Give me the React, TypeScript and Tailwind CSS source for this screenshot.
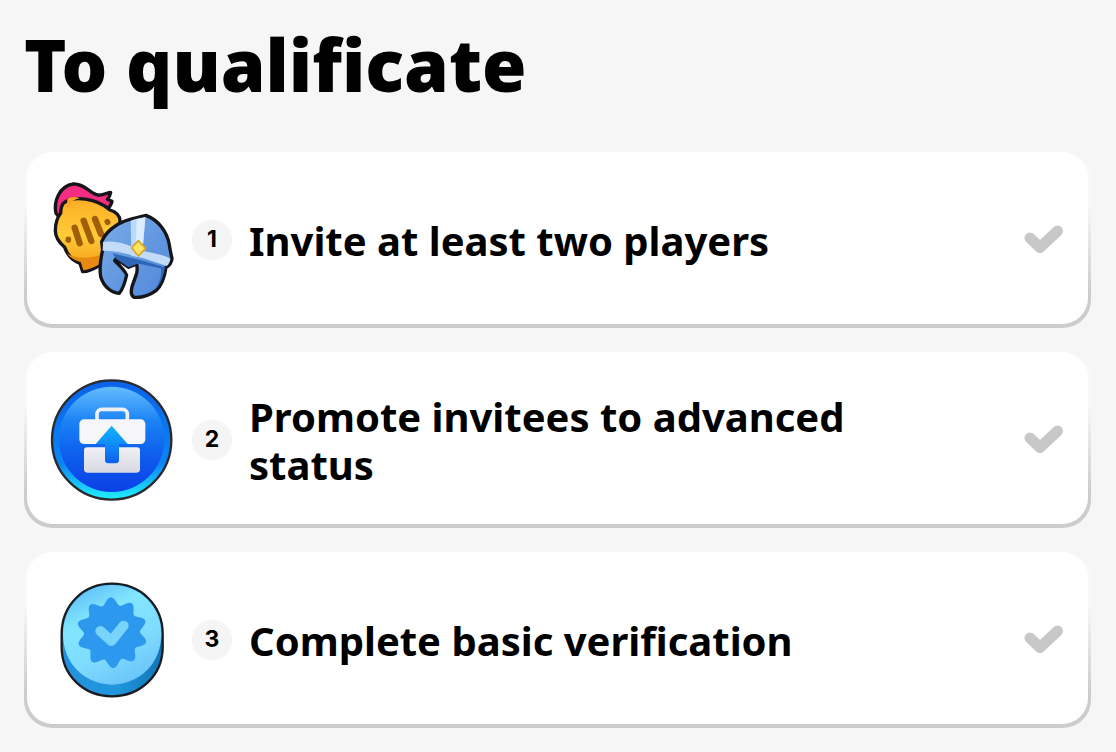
import type { ReactNode } from "react";

const font = { fontFamily: '"Noto Sans", sans-serif' };

function Helmets() {
  return (
    <svg width="124" height="124" viewBox="60 54 372 372">
      <defs>
        <linearGradient id="g1" x1="0" y1="0" x2="0" y2="1">
          <stop offset="0" stopColor="#fcae25" />
          <stop offset="0.5" stopColor="#ffcb38" />
          <stop offset="1" stopColor="#f49c14" />
        </linearGradient>
        <linearGradient id="h1" x1="0" y1="0" x2="1" y2="1">
          <stop offset="0" stopColor="#79ace9" />
          <stop offset="1" stopColor="#4f86d8" />
        </linearGradient>
      </defs>
      <path d="M78 160 C70 125 88 78 130 72 C165 70 180 102 205 105 C220 107 232 97 242 97 C240 108 236 114 232 118 L246 124 C244 134 238 142 230 148 L90 175 Z" fill="#f42c82" stroke="#15151a" strokeWidth="10" strokeLinejoin="round" />
      <path d="M100 130 C130 105 200 115 240 150 C258 155 270 168 270 182 C270 200 258 215 250 230 L215 312 C195 325 175 335 158 335 L150 310 C128 302 112 285 104 262 C88 248 76 232 76 212 C76 190 84 170 92 160 C92 148 94 138 100 130 Z" fill="url(#g1)" stroke="#15151a" strokeWidth="10" strokeLinejoin="round" />
      <path d="M112 118 C118 110 135 108 150 115 C130 118 118 130 110 150 Z" fill="#f9a521" />
      <path d="M110 280 C140 300 190 295 225 280 L212 310 C195 322 175 330 160 330 L152 306 C135 302 120 292 110 280 Z" fill="#e88a12" />
      <g stroke="#a05f06" strokeLinecap="round" fill="none">
        <path d="M115 238 L115 240" strokeWidth="17" />
        <path d="M134 203 L149 250" strokeWidth="19" />
        <path d="M161 182 L184 243" strokeWidth="19" />
        <path d="M195 177 L213 222" strokeWidth="19" />
        <path d="M232 185 L233 187" strokeWidth="17" />
      </g>
      <path d="M348 166 C385 180 412 215 418 255 C420 270 424 285 426 296 C424 308 418 318 408 322 C404 352 396 376 378 392 C360 405 335 414 312 412 C304 408 302 396 306 380 L320 340 C322 330 322 322 320 312 L296 322 L258 296 L254 302 C268 315 284 330 290 345 C285 368 280 385 268 400 C245 398 222 382 212 350 C208 325 212 295 218 270 L215 245 C225 220 255 190 300 178 Z" fill="url(#h1)" stroke="#15151a" strokeWidth="10" strokeLinejoin="round" />
      <path d="M248 280 L330 300 L405 322 C400 350 392 372 376 388 C392 360 396 340 392 325 L330 312 L320 312 L296 322 L258 296 Z" fill="#2f66b8" />
      <path d="M302 182 C316 177 332 173 346 172 L336 290 L304 288 Z" fill="#b9d8fa" />
      <path d="M320 178 L346 172 L336 290 L316 290 Z" fill="#dcedfe" />
      <path d="M219 246 C260 240 290 252 330 270 C365 280 400 282 421 296 C420 306 416 313 410 318 C380 308 350 296 320 290 C285 278 250 272 218 272 Z" fill="#c2dbf8" />
      <path d="M325 242 L347 265 L325 288 L305 263 Z" fill="#fde564" stroke="#dca322" strokeWidth="5" strokeLinejoin="round" />
    </svg>
  );
}

function Briefcase() {
  return (
    <svg width="124" height="124" viewBox="60 54 372 372">
      <defs>
        <linearGradient id="b1" x1="0" y1="0" x2="0" y2="1">
          <stop offset="0" stopColor="#0a62e8" />
          <stop offset="0.7" stopColor="#0b86f4" />
          <stop offset="1" stopColor="#1ff2ff" />
        </linearGradient>
        <linearGradient id="b2" x1="0" y1="0" x2="0" y2="1">
          <stop offset="0" stopColor="#65bcfd" />
          <stop offset="0.32" stopColor="#1c84f6" />
          <stop offset="0.6" stopColor="#0f63ee" />
          <stop offset="1" stopColor="#0b3fe6" />
        </linearGradient>
        <linearGradient id="b3" x1="0" y1="0" x2="0" y2="1">
          <stop offset="0" stopColor="#f0f0f5" />
          <stop offset="1" stopColor="#d8d8e2" />
        </linearGradient>
        <linearGradient id="b4" x1="0" y1="0" x2="0" y2="1">
          <stop offset="0" stopColor="#0fb4ff" />
          <stop offset="0.5" stopColor="#0f8cf8" />
          <stop offset="1" stopColor="#0e5eee" />
        </linearGradient>
      </defs>
      <circle cx="245" cy="240" r="179" fill="url(#b1)" stroke="#2a2a30" strokeWidth="7" />
      <circle cx="245" cy="238" r="158" fill="url(#b2)" />
      <rect x="201" y="148" width="91" height="40" rx="14" fill="none" stroke="#eef0f6" strokeWidth="11" />
      <rect x="148" y="178" width="198" height="74" rx="14" fill="#f6f6f9" />
      <rect x="162" y="262" width="168" height="76" rx="10" fill="url(#b3)" />
      <path d="M245 197 L293 252 H267 V300 Q267 310 257 310 H235 Q225 310 225 300 V252 H197 Z" fill="url(#b4)" />
    </svg>
  );
}

function Badge() {
  const bumps = 10;
  let d = "";
  const steps = 240;
  for (let i = 0; i < steps; i++) {
    const a = (i / steps) * Math.PI * 2;
    const r = 95 + 11 * Math.cos(a * bumps + 0.35);
    d += `${i ? "L" : "M"}${(246 + r * Math.sin(a)).toFixed(1)} ${(218 - r * Math.cos(a)).toFixed(1)}`;
  }
  d += "Z";
  return (
    <svg width="124" height="124" viewBox="60 54 372 372">
      <defs>
        <linearGradient id="c1" x1="0.2" y1="0" x2="0.7" y2="1">
          <stop offset="0" stopColor="#5dbcf7" />
          <stop offset="0.3" stopColor="#82e6ff" />
          <stop offset="0.65" stopColor="#7fdcfe" />
          <stop offset="1" stopColor="#69c2fa" />
        </linearGradient>
        <linearGradient id="c2" x1="0" y1="0" x2="1" y2="0">
          <stop offset="0" stopColor="#2590de" />
          <stop offset="0.55" stopColor="#2196dc" />
          <stop offset="1" stopColor="#0f74b6" />
        </linearGradient>
      </defs>
      <path d="M95 222 C95 135 160 71 246 71 C332 71 398 135 398 222 V262 C398 345 332 409 246 409 C160 409 95 345 95 262 Z" fill="url(#c2)" stroke="#1b1b20" strokeWidth="7" />
      <path d="M99 222 C99 138 162 75 246 75 C330 75 394 138 394 222 C394 310 330 372 246 374 C162 372 99 310 99 222 Z" fill="url(#c1)" />
      <path d={d} fill="#2c98ee" />
      <path d="M211 213 L244 243 L281 197" fill="none" stroke="#78d3fd" strokeWidth="30" strokeLinecap="round" strokeLinejoin="round" />
    </svg>
  );
}

function Step({ n, icon, text }: { n: number; icon: ReactNode; text: string }) {
  return (
    <div className="rounded-[28px] bg-gradient-to-b from-[#f8f8f8] from-30% to-[#cccccc] to-80% pb-[4px] pl-[3px] pr-[3px]">
      <div className="flex h-[172px] items-center rounded-[26px] bg-white pl-[23px] pr-[23px] pt-[3px]">
        <div className="flex w-[124px] shrink-0 items-center justify-center">{icon}</div>
        <div
          className="ml-[18px] flex h-10 w-10 shrink-0 items-center justify-center rounded-full bg-[#f5f5f5] text-[23px] font-bold leading-none text-black"
          style={{ fontFamily: "Inter, sans-serif" }}
        >
          {n}
        </div>
        <div className="ml-[17px] mt-[2px] flex-1 pr-[120px] text-[40px] font-bold leading-[48px] text-black">{text}</div>
        <svg width="42" height="32" viewBox="0 0 42 32" className="shrink-0">
          <path d="M7 14 L17 23.500 L34.500 7" fill="none" stroke="#c8c8c8" strokeWidth="11" strokeLinecap="round" strokeLinejoin="round" />
        </svg>
      </div>
    </div>
  );
}

export default function App() {
  return (
    <div className="h-[752px] w-[1116px] overflow-hidden bg-[#f6f6f6] px-[24px]" style={font}>
      <h1 className="pt-[22px] text-[72px] font-black leading-[84px] text-black">To qualificate</h1>
      <div className="mt-[46px] flex w-[1067px] flex-col gap-[24px]">
        <Step n={1} icon={<Helmets />} text="Invite at least two players" />
        <Step n={2} icon={<Briefcase />} text="Promote invitees to advanced status" />
        <Step n={3} icon={<Badge />} text="Complete basic verification" />
      </div>
    </div>
  );
}
